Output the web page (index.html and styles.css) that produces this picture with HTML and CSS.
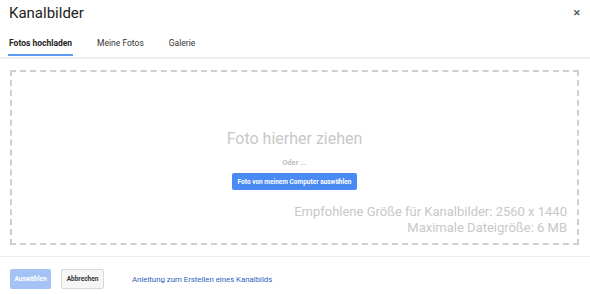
FILE: index.html
```html
<!DOCTYPE html>
<html lang="de">
<head>
  <meta charset="UTF-8" />
  <title>Kanalbilder</title>
  <link rel="stylesheet" href="styles.css">
</head>
<body>
  <div class="dialog">
    <header class="dialog-head">
      <h1>Kanalbilder</h1>
      <span class="close">&#x2715;</span>
    </header>

    <nav class="tabs">
      <a class="tab active">Fotos hochladen</a>
      <a class="tab">Meine Fotos</a>
      <a class="tab">Galerie</a>
    </nav>

    <div class="drop-wrap">
      <div class="drop-zone">
        <div class="drop-center">
          <div class="drop-title">Foto hierher ziehen</div>
          <div class="drop-or">Oder ...</div>
          <button class="btn-blue">Foto von meinem Computer auswählen</button>
        </div>
        <div class="drop-info">
          <div>Empfohlene Größe für Kanalbilder: 2560 x 1440</div>
          <div>Maximale Dateigröße: 6 MB</div>
        </div>
      </div>
    </div>

    <footer class="dialog-foot">
      <button class="btn-select" disabled>Auswählen</button>
      <button class="btn-cancel">Abbrechen</button>
      <a class="help-link">Anleitung zum Erstellen eines Kanalbilds</a>
    </footer>
  </div>
</body>
</html>
```

FILE: styles.css
```css
body {
  margin: 0;
  font-family: Roboto, Arial, sans-serif;
  background: #fff;
  color: #222;
}

.dialog {
  width: 590px;
  height: 294px;
  display: flex;
  flex-direction: column;
}

.dialog-head {
  display: flex;
  justify-content: space-between;
  align-items: center;
  padding: 2px 9px 0 9px;
  height: 22px;
}

.dialog-head h1 {
  margin: 0;
  font-size: 15px;
  font-weight: 400;
  color: #222;
}

.close {
  font-size: 9px;
  color: #555;
  font-weight: bold;
}

.tabs {
  display: flex;
  align-items: flex-start;
  padding: 0 0 0 8px;
  height: 33px;
  border-bottom: 1px solid #e8e8e8;
  box-shadow: 0 1px 2px rgba(0, 0, 0, 0.06);
}

.tab {
  font-size: 8.5px;
  color: #333;
  padding: 14px 1px 0 1px;
  margin-right: 23px;
  height: 32px;
  box-sizing: border-box;
}

.tab.active {
  font-weight: bold;
  color: #222;
  border-bottom: 2px solid #5b9bf4;
  height: 32px;
}

.drop-wrap {
  padding: 12px 11px 0 10px;
  height: 175px;
}

.drop-zone {
  height: 175px;
  box-sizing: border-box;
  border: 2px dashed #cfcfcf;
  display: flex;
  flex-direction: column;
  align-items: center;
}

.drop-center {
  display: flex;
  flex-direction: column;
  align-items: center;
  padding-top: 57px;
}

.drop-title {
  font-size: 16px;
  color: #c8c8c8;
}

.drop-or {
  font-size: 7.5px;
  font-weight: bold;
  color: #bdbdbd;
  margin-top: 10px;
}

.btn-blue {
  margin-top: 6px;
  background: #4a8af4;
  color: #fff;
  border: none;
  border-radius: 2px;
  font-family: inherit;
  font-size: 6.5px;
  font-weight: bold;
  height: 17px;
  padding: 0 6px;
}

.drop-info {
  align-self: flex-end;
  text-align: right;
  margin-right: 10px;
  margin-top: 14px;
  font-size: 13px;
  line-height: 16px;
  color: #c8c8c8;
}

.dialog-foot {
  margin-top: 11px;
  border-top: 1px solid #ececec;
  display: flex;
  align-items: center;
  padding: 12px 10px 0 10px;
}

.btn-select {
  background: #a4c2f6;
  color: #fff;
  border: none;
  border-radius: 2px;
  font-family: inherit;
  font-size: 6.5px;
  font-weight: bold;
  height: 20px;
  width: 41px;
  padding: 0;
}

.btn-cancel {
  margin-left: 10px;
  background: #f6f6f6;
  color: #333;
  border: 1px solid #d8d8d8;
  border-radius: 2px;
  font-family: inherit;
  font-size: 6.5px;
  font-weight: bold;
  height: 20px;
  width: 43px;
  padding: 0;
}

.help-link {
  margin-left: 28px;
  font-size: 7.8px;
  color: #2a63c0;
}
```
